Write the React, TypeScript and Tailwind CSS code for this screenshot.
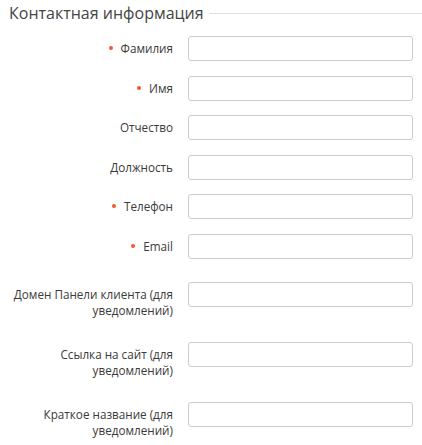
const fields = [
  { label: 'Фамилия', required: true },
  { label: 'Имя', required: true },
  { label: 'Отчество' },
  { label: 'Должность' },
  { label: 'Телефон', required: true },
  { label: 'Email', required: true, gapAfter: true },
  { label: 'Домен Панели клиента (для уведомлений)', multi: true },
  { label: 'Ссылка на сайт (для уведомлений)', multi: true },
  { label: 'Краткое название (для уведомлений)', multi: true },
];

export default function App() {
  return (
    <div className="w-[422px] h-[445px] overflow-hidden bg-white font-['Open_Sans',sans-serif] text-[#3a3a3a]">
      {/* Section title with rule */}
      <div className="flex items-center pl-[9px] pt-[1px]">
        <h2 className="text-[16px] leading-[24px] text-[#444] whitespace-nowrap">Контактная информация</h2>
        <div className="flex-1 h-px bg-[#dcdfe3] ml-[5px] mt-[1px]" />
      </div>

      <div className="mt-[11px] flex flex-col">
        {fields.map((f, i) => (
          <div
            key={i}
            className={`flex items-start ${f.multi ? 'mb-[14px] min-h-[46px]' : f.gapAfter ? 'mb-[23px]' : 'mb-[14.5px]'}`}
          >
            <div className="w-[188px] pr-[15px] flex justify-end">
              <label
                className={`text-[11.7px] leading-[16px] text-right pt-[4px] flex items-center ${f.multi ? 'w-[170px]' : ''}`}
              >
                {f.required && (
                  <span className="inline-block w-[4px] h-[4px] rounded-full bg-[#f25a2a] mr-[8px]" />
                )}
                <span>{f.label}</span>
              </label>
            </div>
            <input
              type="text"
              className="w-[225px] h-[25px] border border-[#c9cdd2] rounded-[3px] bg-white outline-none"
            />
          </div>
        ))}
      </div>
    </div>
  );
}
